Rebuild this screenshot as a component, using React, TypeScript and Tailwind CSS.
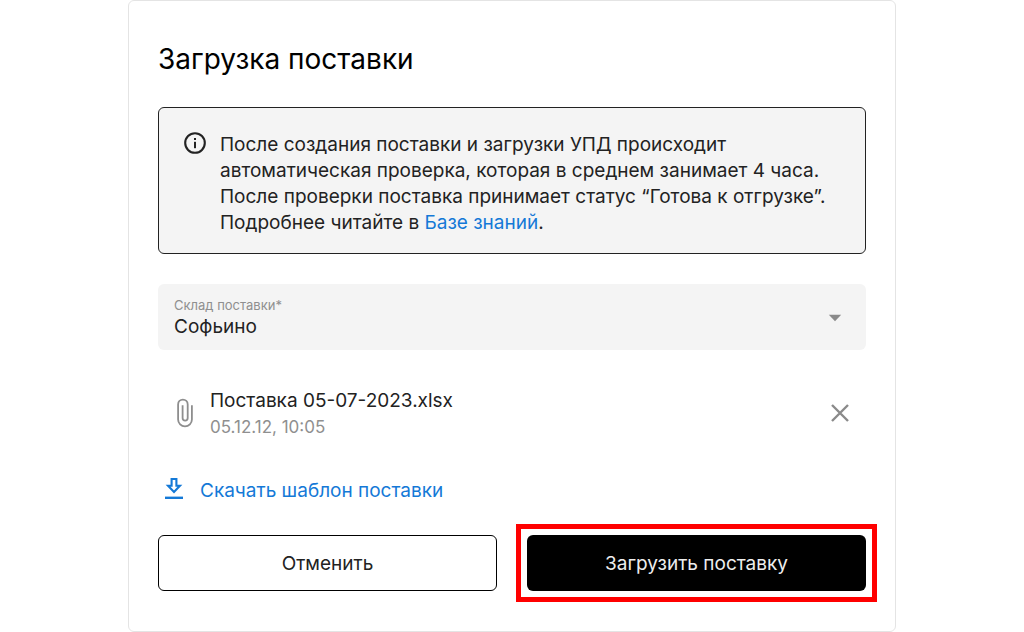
export default function App() {
  return (
    <main className="min-h-screen bg-white font-['Inter','Noto_Sans',sans-serif] text-[#222]">
      <section className="mx-auto max-w-3xl rounded-md border border-[#e4e4e4] px-[29px] pt-10 pb-10">
        <h1 className="text-[28px] leading-9 text-black">Загрузка поставки</h1>

        <div className="mt-[30px] flex gap-3.5 rounded-md border border-[#222] bg-[#f4f4f4] pt-6 pr-4 pb-[17px] pl-[25px]">
          <svg viewBox="1 1 22 22" className="size-[22px] shrink-0" fill="none" aria-hidden="true">
            <circle cx="12" cy="12" r="9.8" stroke="#222" strokeWidth="2.1" />
            <rect x="11" y="7" width="2" height="2" fill="#222" />
            <rect x="11" y="10.8" width="2" height="6.4" fill="#222" />
          </svg>
          <p className="text-[19px] leading-[26px]">
            После создания поставки и загрузки УПД происходит
            <br />
            автоматическая проверка, которая в среднем занимает 4 часа.
            <br />
            После проверки поставка принимает статус “Готова к отгрузке”.
            <br />
            Подробнее читайте в <a href="#knowledge" className="text-[#1479d7]">Базе знаний</a>.
          </p>
        </div>

        <div className="mt-[30px] flex items-center rounded-md bg-[#f4f4f4] pt-3 pr-6 pb-2.5 pl-4">
          <div className="flex grow flex-col">
            <label htmlFor="warehouse" className="text-[13px] leading-[18px] text-[#8f8f8f]">
              Склад поставки*
            </label>
            <select id="warehouse" className="w-full appearance-none bg-transparent text-[19px] leading-[26px] outline-none">
              <option>Софьино</option>
            </select>
          </div>
          <svg viewBox="0 0 14 8" className="h-2 w-3.5" aria-hidden="true">
            <path d="M0.8 0.8H13.2L7 7.2Z" fill="#8a8a8a" />
          </svg>
        </div>

        <div className="mt-[35px] flex items-center pr-4 pl-[18px]">
          <svg viewBox="0 0 18 30" className="h-[30px] w-[18px] shrink-0" fill="none" stroke="#8e8e8e" strokeWidth="1.8" aria-hidden="true">
            <path d="M15.9 7.3V21.4A6.9 6.9 0 0 1 2.1 21.4V6.4A4.6 4.6 0 0 1 11.7 6.4V20A2.5 2.5 0 0 1 6.6 20V7.3" />
          </svg>
          <div className="ml-4 grow pt-[3px]">
            <p className="text-[19px] leading-[26px]">Поставка 05-07-2023.xlsx</p>
            <p className="text-[17px] leading-[26px] text-[#8f8f8f]">05.12.12, 10:05</p>
          </div>
          <button type="button" aria-label="Удалить файл">
            <svg viewBox="0 0 20 20" className="size-5" stroke="#8a8a8a" strokeWidth="2.4" aria-hidden="true">
              <path d="M2 2L18 18M18 2L2 18" />
            </svg>
          </button>
        </div>

        <a href="#template" className="mt-[38px] flex w-fit items-center gap-4 pl-1.5 text-[19px] leading-[26px] text-[#1479d7]">
          <svg viewBox="0 0 20 26" className="h-[26px] w-5" fill="none" stroke="#1479d7" strokeWidth="2.1" aria-hidden="true">
            <path d="M7.6 1H12.4V7.8H15.9L10 13.9L4.1 7.8H7.6Z" />
            <path d="M1 19.8H19" strokeWidth="2.4" />
          </svg>
          Скачать шаблон поставки
        </a>

        <div className="mt-[31px] grid grid-cols-2 gap-[30px]">
          <button type="button" className="h-14 rounded-md border border-black pt-0.5 text-[19px]">
            Отменить
          </button>
          <div className="outline-[5px] outline-offset-[6px] outline-[#ff0000] outline-solid">
            <button type="button" className="h-14 w-full rounded-md bg-black pt-0.5 text-[19px] text-[#eee]">
              Загрузить поставку
            </button>
          </div>
        </div>
      </section>
    </main>
  );
}
